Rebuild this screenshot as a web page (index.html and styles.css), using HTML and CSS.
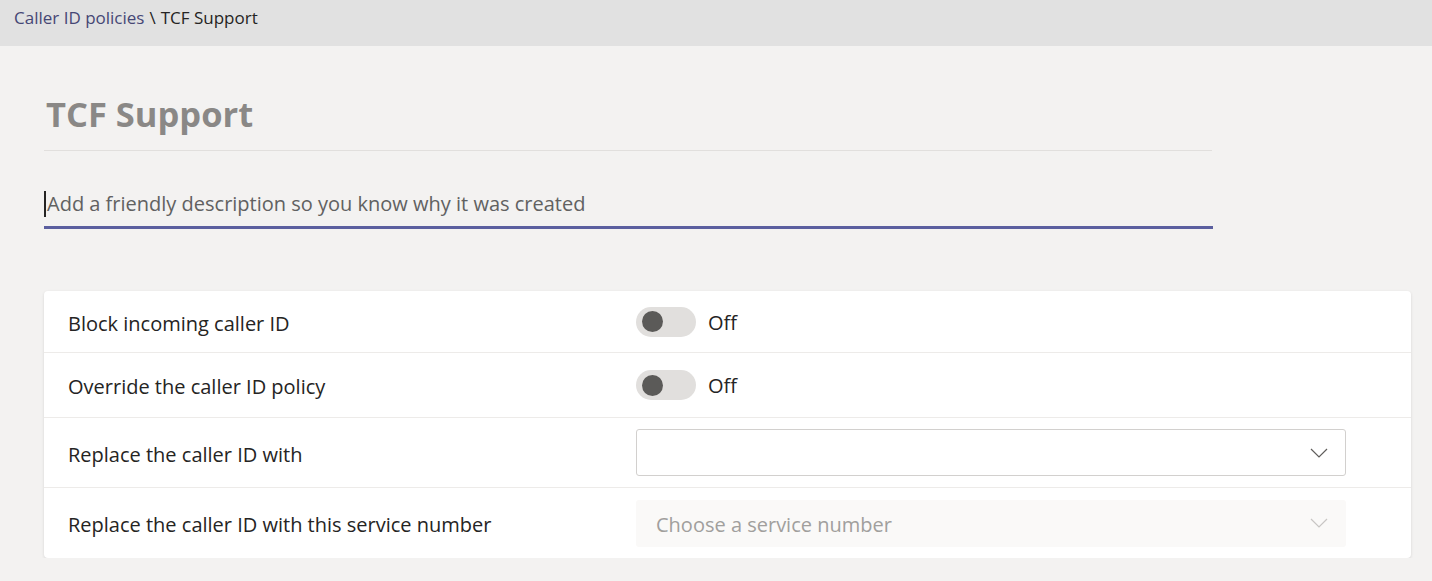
FILE: index.html
```html
<!DOCTYPE html>
<html lang="en">
<head>
    <meta charset="UTF-8">
    <meta name="viewport" content="width=device-width, initial-scale=1.0">
    <title>TCF Support</title>
    <link rel="stylesheet" href="styles.css">
</head>
<body>
    <div class="topbar">
        <a class="crumb-link" href="#">Caller ID policies</a>
        <span class="crumb-sep">\</span>
        <span class="crumb-current">TCF Support</span>
    </div>

    <div class="page">
        <h1 class="title">TCF Support</h1>
        <div class="desc">
            <span class="caret"></span>
            <span class="desc-text">Add a friendly description so you know why it was created</span>
        </div>

        <div class="card">
            <div class="row row-first">
                <div class="label">Block incoming caller ID</div>
                <div class="control">
                    <span class="toggle"><span class="knob"></span></span>
                    <span class="toggle-text">Off</span>
                </div>
            </div>
            <div class="row">
                <div class="label">Override the caller ID policy</div>
                <div class="control">
                    <span class="toggle"><span class="knob"></span></span>
                    <span class="toggle-text">Off</span>
                </div>
            </div>
            <div class="row row-tall">
                <div class="label">Replace the caller ID with</div>
                <div class="control">
                    <div class="dropdown">
                        <span class="dropdown-text"></span>
                        <svg class="chevron" width="18" height="10" viewBox="0 0 18 10"><path d="M1 1 L9 9 L17 1" fill="none" stroke="#605e5c" stroke-width="1.2"/></svg>
                    </div>
                </div>
            </div>
            <div class="row row-tall">
                <div class="label">Replace the caller ID with this service number</div>
                <div class="control">
                    <div class="dropdown disabled">
                        <span class="dropdown-text">Choose a service number</span>
                        <svg class="chevron" width="18" height="10" viewBox="0 0 18 10"><path d="M1 1 L9 9 L17 1" fill="none" stroke="#c8c6c4" stroke-width="1.2"/></svg>
                    </div>
                </div>
            </div>
        </div>
    </div>
</body>
</html>
```

FILE: styles.css
```css
body {
    margin: 0;
    font-family: "Open Sans", "Noto Sans", sans-serif;
    background-color: #f3f2f1;
    color: #252423;
}
.topbar {
    height: 46px;
    background-color: #e1e1e1;
    display: flex;
    align-items: center;
    padding: 0 14px 11px;
    box-sizing: border-box;
    font-size: 17px;
    gap: 5px;
}
.crumb-link {
    color: #464775;
    text-decoration: none;
}
.crumb-sep, .crumb-current {
    color: #252423;
}
.page {
    padding: 0 21px 0 44px;
}
.title {
    margin: 0;
    padding: 48px 0 16px 2px;
    width: 1166px;
    font-size: 34.5px;
    font-weight: 700;
    color: #8a8886;
    line-height: 40px;
    border-bottom: 1px solid #e1dfdd;
}
.desc {
    width: 1169px;
    height: 78px;
    box-sizing: border-box;
    display: flex;
    align-items: center;
    padding-top: 30px;
    border-bottom: 3px solid #5b5f9f;
}
.caret {
    width: 2px;
    height: 26px;
    background-color: #252423;
    margin-right: 1px;
}
.desc-text {
    font-size: 20px;
    color: #616161;
}
.card {
    margin-top: 62px;
    width: 1367px;
    background-color: #fff;
    border-radius: 4px;
    box-shadow: 0 1px 3px rgba(0, 0, 0, 0.12);
}
.row {
    display: flex;
    align-items: center;
    height: 65px;
    border-bottom: 1px solid #edebe9;
    box-sizing: border-box;
}
.row-first {
    height: 62px;
}
.row:last-child {
    border-bottom: none;
}
.row-tall {
    height: 70px;
}
.label {
    width: 592px;
    box-sizing: border-box;
    padding: 3px 0 0 24px;
    font-size: 20px;
    color: #252423;
}
.control {
    display: flex;
    align-items: center;
    flex: 1;
}
.toggle {
    width: 60px;
    height: 30px;
    border-radius: 15px;
    background-color: #e1dfdd;
    display: flex;
    align-items: center;
    padding-left: 6px;
    box-sizing: border-box;
}
.knob {
    width: 21px;
    height: 21px;
    border-radius: 50%;
    background-color: #5b5a58;
}
.toggle-text {
    margin-left: 12px;
    padding-top: 1px;
    font-size: 20px;
    color: #252423;
}
.dropdown {
    width: 710px;
    height: 47px;
    box-sizing: border-box;
    border: 1px solid #d2d0ce;
    border-radius: 3px;
    display: flex;
    align-items: center;
    justify-content: space-between;
    padding: 0 17px 0 19px;
}
.dropdown.disabled {
    border-color: transparent;
    background-color: #faf9f8;
}
.dropdown-text {
    padding-top: 3px;
    font-size: 20px;
    color: #a19f9d;
}
```
